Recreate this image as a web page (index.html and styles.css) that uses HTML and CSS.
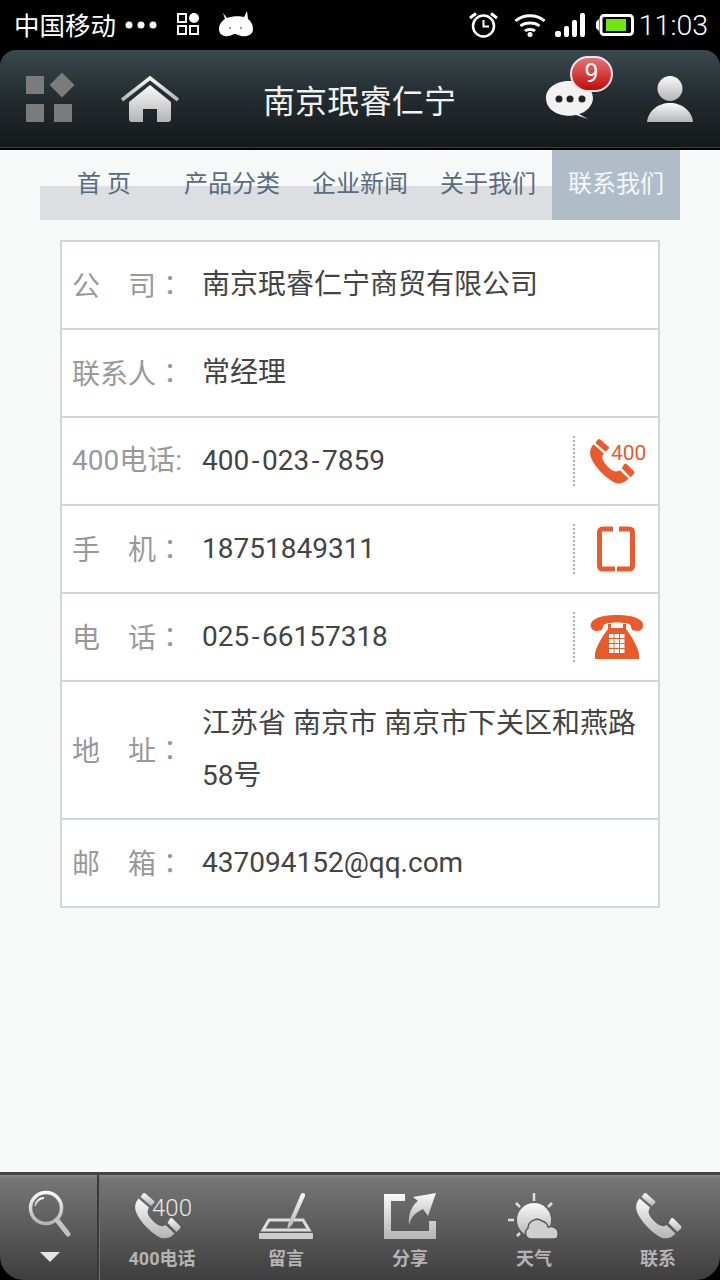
FILE: index.html
```html
<!DOCTYPE html>
<html lang="zh-CN">
<head>
    <meta charset="UTF-8">
    <meta name="viewport" content="width=device-width, initial-scale=1.0">
    <title>南京珉睿仁宁</title>
    <link rel="stylesheet" href="styles.css">
</head>
<body>
    <svg class="defs" width="0" height="0">
        <defs>
            <linearGradient id="lightFill" x1="0" y1="0" x2="0" y2="1">
                <stop offset="0" stop-color="#fafafa"/>
                <stop offset="1" stop-color="#b4b4b4"/>
            </linearGradient>
            <symbol id="handset" viewBox="0 0 47 47">
                <path d="M4.500 6.500 L15 15.500 C12 20 14 24 19 29 C24 34 28 35.500 31.500 33 L40.500 41.500 C37 46 31 47.500 26 45.500 C17 41 6 30 2 20 C0 15 1.500 10 4.500 6.500Z"/>
                <path d="M6.500 5 L9 1.500 Q10 .5 11.500 1.500 L20 9 Q21 10 20 11 L17 14Z"/>
                <path d="M33.500 31 L36 26.500 Q37 25.500 38.500 26.500 L46 34 Q47 35 46 36.500 L42.500 40Z"/>
            </symbol>
        </defs>
    </svg>

    <!-- status bar -->
    <div class="status">
        <span class="carrier">中国移动</span>
        <svg class="st-dots" width="32" height="8" viewBox="0 0 32 8" fill="#fff"><circle cx="4" cy="4" r="3.500"/><circle cx="16" cy="4" r="3.500"/><circle cx="28" cy="4" r="3.500"/></svg>
        <svg class="st-grid" width="22" height="22" viewBox="0 0 22 22" fill="none" stroke="#fff" stroke-width="2"><rect x="1" y="1" width="8" height="8"/><rect x="1" y="13" width="8" height="8"/><rect x="13" y="13" width="8" height="8"/><circle cx="17" cy="5" r="5" fill="#fff" stroke="none"/></svg>
        <svg class="st-bot" width="34" height="26" viewBox="0 0 34 26" fill="#fff"><path d="M4 2 L8 7 C13 5 21 5 25 6 L28 0 L29 8 C32 10 34 14 34 18 C34 24 28 26 22 25 C19 24 18 23 16 23 C14 23 12 25 9 25 C4 26 0 23 0 18 C0 13 3 10 6 8Z"/><circle cx="11" cy="17" r="1" fill="#777"/><circle cx="22" cy="17" r="1" fill="#777"/></svg>
        <span class="spacer"></span>
        <svg class="st-alarm" width="29" height="26" viewBox="0 0 29 26" fill="none" stroke="#fff" stroke-width="2.500"><circle cx="14.500" cy="14" r="10.500"/><path d="M14.500 8 V14.500 H20" stroke-width="2"/><path d="M1 6 L7 1.500 M28 6 L22 1.500" stroke-width="3"/></svg>
        <svg class="st-wifi" width="32" height="24" viewBox="0 0 32 24" fill="none" stroke="#fff" stroke-width="3"><path d="M1.500 8 C9 1 23 1 30.500 8"/><path d="M6.500 13 C11 9 21 9 25.500 13"/><path d="M11 18 C13 16 19 16 21 18"/><circle cx="16" cy="21.500" r="2.500" fill="#fff" stroke="none"/></svg>
        <svg class="st-signal" width="30" height="24" viewBox="0 0 30 24" fill="#fff"><rect x="0" y="18" width="6" height="6" rx="2"/><rect x="9" y="13" width="5" height="11" rx="2"/><rect x="17" y="7" width="5" height="17" rx="2"/><rect x="25" y="0" width="5" height="24" rx="2"/></svg>
        <svg class="st-batt" width="38" height="22" viewBox="0 0 38 22"><path d="M0 8 L3 5 V17 L0 14Z" fill="#fff"/><rect x="5" y="1.500" width="31.500" height="19" rx="3" fill="none" stroke="#fff" stroke-width="3"/><rect x="10" y="5" width="20" height="12" fill="#6fe812"/></svg>
        <span class="clock">11:03</span>
    </div>

    <!-- top title bar -->
    <header class="topbar">
        <svg class="top-grid" width="46" height="46" viewBox="0 0 46 46" fill="#7b7b7b"><rect x="0" y="0" width="18" height="18"/><path d="M36 -3.500 L48.500 9 L36 21.500 L23.500 9Z"/><rect x="0" y="28" width="18" height="18"/><rect x="28" y="28" width="18" height="18"/></svg>
        <svg class="top-home" width="58" height="46" viewBox="0 0 58 46"><path d="M1 24 L29 2 L57 24" fill="none" stroke="url(#lightFill)" stroke-width="3.500"/><path d="M8 26 L29 9 L50 26 V43 Q50 46 47 46 H36 V33 H22 V46 H11 Q8 46 8 43Z" fill="url(#lightFill)"/></svg>
        <h1 class="title">南京珉睿仁宁</h1>
        <div class="msg">
            <svg width="48" height="40" viewBox="0 0 48 40"><path d="M23 1 C36 1 47 8 47 18 C47 26 39 33 33 34 L42 39 L30 35 C26 36 20 36 16 35 C7 33 0 27 0 18 C0 8 10 1 23 1Z" fill="#f2f2f2"/><circle cx="13" cy="19" r="3.500" fill="#222"/><circle cx="24" cy="19" r="3.500" fill="#222"/><circle cx="36" cy="19" r="3.500" fill="#222"/></svg>
            <span class="badge">9</span>
        </div>
        <svg class="top-user" width="46" height="46" viewBox="0 0 46 46"><circle cx="23" cy="12.500" r="12.500" fill="url(#lightFill)"/><path d="M0 46 C1 35 11 27 23 27 C35 27 45 35 46 46Z" fill="url(#lightFill)"/></svg>
    </header>

    <main class="page">
        <nav class="tabs">
            <a class="tab">首 页</a>
            <a class="tab">产品分类</a>
            <a class="tab">企业新闻</a>
            <a class="tab">关于我们</a>
            <a class="tab active">联系我们</a>
        </nav>

        <div class="card">
            <div class="row">
                <span class="label">公　司<i class="colon" lang="zh-TW">：</i></span>
                <span class="value">南京珉睿仁宁商贸有限公司</span>
            </div>
            <div class="row">
                <span class="label">联系人<i class="colon" lang="zh-TW">：</i></span>
                <span class="value">常经理</span>
            </div>
            <div class="row">
                <span class="label">400电话:</span>
                <span class="value">400<i class="dash">-</i>023<i class="dash">-</i>7859</span>
                <span class="action">
                    <svg width="60" height="46" viewBox="0 0 60 46" fill="#e95a2c"><use href="#handset" width="46" height="46"/><text class="icon-num" x="22" y="22">400</text></svg>
                </span>
            </div>
            <div class="row">
                <span class="label">手　机<i class="colon" lang="zh-TW">：</i></span>
                <span class="value">18751849311</span>
                <span class="action">
                    <svg width="60" height="46" viewBox="0 0 60 46"><path d="M24 3 H14 Q10.500 3 10.500 6.500 V39.500 Q10.500 43 14 43 H26 M28 43 H40 Q43.500 43 43.500 39.500 V6.500 Q43.500 3 40 3 H30" fill="none" stroke="#e95a2c" stroke-width="5"/></svg>
                </span>
            </div>
            <div class="row">
                <span class="label">电　话<i class="colon" lang="zh-TW">：</i></span>
                <span class="value">025<i class="dash">-</i>66157318</span>
                <span class="action">
                    <svg width="60" height="46" viewBox="4 0 60 46" fill="#e95a2c"><path d="M6 13 C4 6 14 1 32 1 C50 1 60 6 58 13 Q57 17 52 17 L47 16 C46 13 46 11 44 10 C38 8 26 8 20 10 C18 11 18 13 17 16 L12 17 Q7 17 6 13Z"/><path d="M23 10 H26 V14 H38 V10 H41 V15 C45 20 53 32 54 40 V45 H10 V40 C11 32 19 20 23 15Z"/><g fill="#fff"><rect x="24" y="20" width="4.500" height="4"/><rect x="29.500" y="20" width="4.500" height="4"/><rect x="35" y="20" width="4.500" height="4"/><rect x="24" y="25" width="4.500" height="4"/><rect x="29.500" y="25" width="4.500" height="4"/><rect x="35" y="25" width="4.500" height="4"/><rect x="24" y="30" width="4.500" height="4"/><rect x="29.500" y="30" width="4.500" height="4"/><rect x="35" y="30" width="4.500" height="4"/><rect x="24" y="35" width="4.500" height="4"/><rect x="29.500" y="35" width="4.500" height="4"/><rect x="35" y="35" width="4.500" height="4"/></g></svg>
                </span>
            </div>
            <div class="row tall">
                <span class="label">地　址<i class="colon" lang="zh-TW">：</i></span>
                <span class="value">江苏省 南京市 南京市下关区和燕路58号</span>
            </div>
            <div class="row">
                <span class="label">邮　箱<i class="colon" lang="zh-TW">：</i></span>
                <span class="value">437094152@qq.com</span>
            </div>
        </div>
    </main>

    <!-- bottom toolbar -->
    <footer class="toolbar">
        <div class="search">
            <svg width="44" height="48" viewBox="0 0 44 48" fill="none" stroke="url(#lightFill)"><circle cx="18" cy="18" r="15.500" stroke-width="3.500"/><path d="M7 16 C8 11 12 8 16 8" stroke-width="2"/><path d="M29 30 L40 44" stroke-width="5" stroke-linecap="round" stroke="#c4c4c4"/></svg>
            <svg class="caret" width="20" height="10" viewBox="0 0 20 10" fill="#e4e4e4"><path d="M0 0 H20 L10 10Z"/></svg>
        </div>
        <div class="tools">
            <div class="tool">
                <svg class="tool-icon" width="62" height="48" viewBox="-3 0 62 48" fill="url(#lightFill)"><use href="#handset" width="47" height="47"/><text class="tool-num" x="18" y="24">400</text></svg>
                <span>400电话</span>
            </div>
            <div class="tool">
                <svg class="tool-icon" width="56" height="48" viewBox="0 0 56 48"><path d="M5 38 L11 28 H45 L51 38Z" fill="none" stroke="#ddd" stroke-width="3"/><rect x="1" y="41" width="54" height="6" rx="1" fill="#ccc"/><path d="M30 32 L43 2 Q45 0 47 2 L47 4 L34 33 L29 38Z" fill="url(#lightFill)"/></svg>
                <span>留言</span>
            </div>
            <div class="tool">
                <svg class="tool-icon" width="54" height="48" viewBox="0 0 54 48" fill="url(#lightFill)"><path d="M1 2 H22 V9 H8 V39 H46 V29 H53 V47 H1Z"/><path d="M53 1 L45 24 L40 17 C32 21 28 25 26 33 C25 22 29 13 35 9 L30 5Z"/></svg>
                <span>分享</span>
            </div>
            <div class="tool">
                <svg class="tool-icon" width="54" height="48" viewBox="0 0 54 48"><path d="M27 1 V9 M9 11 L13 15 M45 11 L41 15 M1 28 H7 M10 44 L13 41" stroke="#ddd" stroke-width="2.500" fill="none"/><circle cx="27" cy="28" r="17" fill="url(#lightFill)"/><path d="M24 47 C18 47 17 39 21 36 C21 29 30 25 35 29 C39 30 41 33 41 35 C48 33 52 38 51 43 C51 46 49 47 47 47Z" fill="#cfcfcf" stroke="#555" stroke-width="1.500"/></svg>
                <span>天气</span>
            </div>
            <div class="tool">
                <svg class="tool-icon" width="47" height="48" viewBox="0 0 47 48" fill="url(#lightFill)"><use href="#handset" width="47" height="47"/></svg>
                <span>联系</span>
            </div>
        </div>
    </footer>
</body>
</html>
```

FILE: styles.css
```css
html, body {
    margin: 0;
    padding: 0;
}
body {
    width: 720px;
    height: 1280px;
    display: flex;
    flex-direction: column;
    background: #000;
    overflow: hidden;
    font-family: Roboto, "Noto Sans CJK SC", sans-serif;
}
svg {
    overflow: visible;
}
.defs {
    position: absolute;
}

/* status bar */
.status {
    height: 50px;
    display: flex;
    align-items: center;
    padding: 0 12px 0 14px;
    color: #fff;
    box-sizing: border-box;
}
.carrier {
    font-size: 25.500px;
    margin-bottom: 4px;
}
.st-dots {
    margin-left: 9px;
}
.st-grid {
    margin-left: 20px;
    margin-bottom: 2px;
}
.st-bot {
    margin-left: 20px;
    margin-bottom: 2px;
}
.spacer {
    flex: 1;
}
.st-wifi {
    margin-left: 16px;
}
.st-signal {
    margin-left: 9px;
}
.st-batt {
    margin-left: 11px;
}
.clock {
    margin-left: 5px;
    font-size: 28.500px;
    font-weight: 300;
}

/* title bar */
.topbar {
    height: 100px;
    position: relative;
    display: flex;
    align-items: center;
    box-sizing: border-box;
    padding: 0 27px 2px 26px;
    background: linear-gradient(#3b484e 0, #262f34 40%, #15181a 97%, #3a3a3a 97%, #3a3a3a 98%, #000 98%);
    border-radius: 16px 16px 0 0;
}
.top-home {
    margin-left: 49px;
}
.title {
    flex: 1;
    margin: 0;
    text-align: center;
    font-size: 32px;
    font-weight: 400;
    letter-spacing: .2px;
    color: #f2f2f2;
    padding-right: 6px;
}
.msg {
    position: relative;
    width: 48px;
    height: 40px;
    margin-top: 2px;
}
.badge {
    position: absolute;
    left: 24px;
    top: -24px;
    width: 43px;
    height: 36px;
    box-sizing: border-box;
    border: 2px solid #f0e4e4;
    border-radius: 18px;
    background: linear-gradient(#e27575, #c40a0a);
    color: #fff;
    font-size: 25px;
    line-height: 32px;
    text-align: center;
}
.top-user {
    margin-left: 53px;
}

/* content */
.page {
    flex: 1;
    background: #f7f9f8;
    padding: 0 40px;
}
.tabs {
    height: 70px;
    display: flex;
    background: linear-gradient(transparent 36px, #dcdee2 36px);
}
.tab {
    flex: 1;
    height: 70px;
    line-height: 68px;
    text-align: center;
    font-size: 24px;
    color: #5a6a80;
}
.tab.active {
    background: #b0bcc8;
    color: #f4f6f8;
}
.card {
    margin: 20px 20px 0;
    background: #fff;
    border: 2px solid #d0d8d8;
    border-bottom: 0;
}
.row {
    min-height: 86px;
    display: flex;
    align-items: center;
    border-bottom: 2px solid #d0d8d8;
    padding-left: 10px;
}
.row.tall {
    min-height: 136px;
}
.label {
    width: 130px;
    flex: none;
    font-size: 28px;
    line-height: 50px;
    color: #999;
    white-space: nowrap;
}
.colon {
    font-style: normal;
    font-family: "Noto Sans CJK TC", sans-serif;
}
.value {
    flex: 1;
    font-size: 28px;
    line-height: 52px;
    color: #444;
    padding-right: 18px;
}
.dash {
    font-style: normal;
    margin: 0 2.500px;
}
.action {
    width: 85px;
    height: 50px;
    flex: none;
    display: flex;
    align-items: center;
    justify-content: flex-start;
    padding-left: 14px;
    box-sizing: border-box;
    border-left: 2px dotted #b0b0b0;
}
.icon-num {
    font-size: 21px;
}

/* toolbar */
.toolbar {
    height: 108px;
    display: flex;
    box-sizing: border-box;
    border-top: 3px solid #444;
    background: linear-gradient(#8a8a8a 0, #767676 4px, #3e3e3e 100%);
    border-radius: 0 0 24px 24px;
}
.search {
    width: 99px;
    flex: none;
    box-sizing: border-box;
    border-right: 2px solid #3a3a3a;
    display: flex;
    flex-direction: column;
    align-items: center;
    padding: 15px 0 0 3px;
}
.caret {
    margin-top: 14px;
}
.tools {
    flex: 1;
    display: flex;
    border-left: 1px solid #6e6e6e;
}
.tool {
    flex: 1;
    display: flex;
    flex-direction: column;
    align-items: center;
    padding-top: 17px;
    font-size: 18px;
    font-weight: 700;
    color: #b4b4b4;
}
.tool span {
    margin-top: 6px;
    line-height: 26px;
}
.tool-num {
    font-size: 24px;
    font-weight: 300;
    fill: #e8e8e8;
}
```
